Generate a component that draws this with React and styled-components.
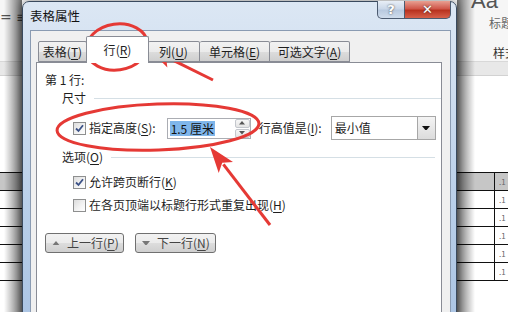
import React from "react";
import styled, { createGlobalStyle } from "styled-components";

const GlobalStyle = createGlobalStyle`
  html, body {
    margin: 0;
    padding: 0;
    width: 508px;
    height: 312px;
    overflow: hidden;
    background: #ffffff;
    font-family: "Noto Sans CJK SC", "Noto Sans", sans-serif;
    font-size: 12px;
    color: #1e1e1e;
  }
`;

const tableRows = [true, false, false, false, false, false];

const Page = styled.div`
  position: relative;
  width: 508px;
  height: 312px;
  display: flex;
  overflow: hidden;
`;

const DocPane = styled.div`
  display: flex;
  flex-direction: column;
  width: ${(p) => p.width}px;
  flex: ${(p) => (p.grow ? 1 : "none")};
  background: #ffffff;
  position: relative;
`;

const Ribbon = styled.div`
  height: 62px;
  background: #f6f6f6;
  border-bottom: 1px solid #d8d8d8;
  box-sizing: border-box;
  display: flex;
  flex-direction: column;
  padding-left: ${(p) => p.indent}px;
  color: #555;
  overflow: hidden;
`;

const Band = styled.div`
  height: 13px;
  background: #e8e8e8;
  border-bottom: 1px solid #d2d2d2;
`;

const Blank = styled.div`
  height: 96px;
`;

const TableRow = styled.div`
  height: 17px;
  border-top: 1.5px solid #111;
  background: ${(p) => (p.head ? "#c6c6c6" : "#fff")};
  display: flex;
`;

const Cell = styled.div`
  width: ${(p) => p.width}px;
  border-right: ${(p) => (p.line ? "1.5px solid #111" : "none")};
  font-size: 8px;
  color: #666;
  padding-left: 4px;
  line-height: 17px;
`;

const Shade = styled.div`
  position: absolute;
  top: 0;
  bottom: 0;
  ${(p) => (p.side === "left" ? "right: 0;" : "left: 0;")}
  width: 18px;
  background: linear-gradient(
    ${(p) => (p.side === "left" ? "to left" : "to right")},
    rgba(0, 0, 0, 0.55),
    rgba(0, 0, 0, 0)
  );
  pointer-events: none;
`;

const Dialog = styled.div`
  position: absolute;
  left: 22px;
  top: 1px;
  width: 435px;
  height: 340px;
  border: 1px solid #3a4a5e;
  border-radius: 7px 7px 0 0;
  box-sizing: border-box;
  background: linear-gradient(
    to bottom,
    #dce7f4 0%,
    #cfdef0 25%,
    #b9cfe9 60%,
    #a9c3e3 100%
  );
  display: flex;
  flex-direction: column;
  box-shadow: 0 0 10px rgba(0, 0, 0, 0.55);
`;

const TitleBar = styled.div`
  height: 28px;
  display: flex;
  align-items: flex-start;
  padding-left: 7px;
`;

const Title = styled.div`
  font-size: 12.5px;
  line-height: 28px;
  color: #111;
  flex: 1;
`;

const CaptionButton = styled.div`
  width: ${(p) => p.width}px;
  height: 18px;
  margin-top: -1px;
  box-sizing: border-box;
  border: 1px solid #4c5b70;
  border-top: none;
  display: flex;
  align-items: center;
  justify-content: center;
  font-family: "DejaVu Sans", sans-serif;
  font-weight: bold;
  font-size: 13px;
  color: #ffffff;
  background: ${(p) =>
    p.close
      ? "linear-gradient(to bottom, #e8a092 0%, #d0574a 45%, #b8321f 55%, #d7604a 100%)"
      : "linear-gradient(to bottom, #e8eef6 0%, #cbd8e9 45%, #b8c9df 55%, #cfdcec 100%)"};
  border-radius: ${(p) => (p.close ? "0 0 5px 0" : "0 0 0 5px")};
  text-shadow: 0 0 2px #333;
  ${(p) => (p.close ? "margin-right: 5px; border-left: none;" : "")}
`;

const Client = styled.div`
  flex: 1;
  margin: 0 5px 0 7px;
  background: #f0f0f0;
  border: 1px solid #8a9bb2;
  padding: 5px 8px 0 5px;
  display: flex;
  flex-direction: column;
`;

const TabRow = styled.div`
  display: flex;
  align-items: flex-end;
  padding-left: 2px;
  height: 26px;
  position: relative;
  z-index: 1;
`;

const Tab = styled.div`
  width: ${(p) => p.width}px;
  height: ${(p) => (p.active ? 27 : 21)}px;
  box-sizing: border-box;
  border: 1px solid #898c95;
  border-bottom: ${(p) => (p.active ? "none" : "1px solid #898c95")};
  margin-left: ${(p) => (p.active ? -1 : 0)}px;
  margin-right: ${(p) => (p.active ? -1 : 0)}px;
  margin-bottom: ${(p) => (p.active ? -1 : 0)}px;
  position: relative;
  z-index: ${(p) => (p.active ? 2 : 1)};
  border-left: ${(p) => (p.first || p.active ? "1px solid #898c95" : "none")};
  border-radius: 2px 2px 0 0;
  background: ${(p) =>
    p.active
      ? "#ffffff"
      : "linear-gradient(to bottom, #f2f2f2 0%, #ebebeb 50%, #dddddd 51%, #cfcfcf 100%)"};
  display: flex;
  align-items: center;
  justify-content: center;
  font-size: 12px;
  line-height: 16px;
  padding-top: ${(p) => (p.active ? 0 : 1)}px;
`;

const Key = styled.span`
  text-decoration: underline;
  text-underline-offset: 2px;
`;

const Panel = styled.div`
  flex: 1;
  background: #ffffff;
  border: 1px solid #898c95;
  padding: 8px 0 0 8px;
  display: flex;
  flex-direction: column;
`;

const Text = styled.div`
  line-height: 18px;
  white-space: nowrap;
`;

const GroupHead = styled.div`
  display: flex;
  align-items: center;
  gap: 8px;
  margin: ${(p) => p.margin};
  padding-left: 17px;
  padding-right: ${(p) => p.right}px;
  line-height: 18px;
  &::after {
    content: "";
    flex: 1;
    height: 1px;
    background: #d5dfe5;
  }
`;

const Row = styled.div`
  display: flex;
  align-items: center;
  padding-left: 28px;
  margin-top: ${(p) => p.top}px;
  height: ${(p) => p.height || 18}px;
`;

const Box = styled.div`
  width: 13px;
  height: 13px;
  box-sizing: border-box;
  border: 1px solid #8e8f8f;
  background: linear-gradient(135deg, #dcdcdc 0%, #f4f4f4 60%, #ffffff 100%);
  display: flex;
  align-items: center;
  justify-content: center;
  margin-right: 3px;
  flex: none;
`;

const Label = styled.div`
  white-space: nowrap;
  line-height: 18px;
`;

const Spin = styled.div`
  margin-left: 11px;
  width: 84px;
  height: 21px;
  box-sizing: border-box;
  border: 1px solid #abadb3;
  display: flex;
  align-items: center;
  padding-left: 2px;
`;

const Selected = styled.span`
  background: #7fb6ea;
  color: #111;
  line-height: 15px;
  padding: 0 1px;
  flex: none;
`;

const SpinButtons = styled.div`
  margin-left: auto;
  width: 15px;
  height: 19px;
  display: flex;
  flex-direction: column;
  gap: 1px;
`;

const SpinButton = styled.div`
  flex: 1;
  border: 1px solid #c4c7cd;
  border-radius: 2px;
  background: linear-gradient(to bottom, #f7f7f7, #e4e4e4);
  display: flex;
  align-items: center;
  justify-content: center;
`;

const Select = styled.div`
  margin-left: 9px;
  width: 105px;
  height: 24px;
  box-sizing: border-box;
  border: 1px solid #a7a7a7;
  display: flex;
  align-items: stretch;
  background: #fff;
`;

const SelectValue = styled.div`
  flex: 1;
  padding-left: 3px;
  line-height: 22px;
`;

const DropButton = styled.div`
  width: 17px;
  border-left: 1px solid #a7a7a7;
  background: linear-gradient(to bottom, #f4f4f4, #dcdcdc);
  display: flex;
  align-items: center;
  justify-content: center;
`;

const ButtonRow = styled.div`
  display: flex;
  gap: 11px;
  margin-top: 19px;
`;

const NavButton = styled.div`
  width: ${(p) => p.width}px;
  height: 20px;
  box-sizing: border-box;
  border: 1px solid #707070;
  border-radius: 3px;
  background: linear-gradient(to bottom, #f2f2f2 0%, #ebebeb 50%, #dddddd 51%, #cfcfcf 100%);
  display: flex;
  align-items: center;
  gap: 7px;
  padding-left: 6px;
  line-height: 16px;
  color: #444;
`;

const Overlay = styled.svg`
  position: absolute;
  left: 0;
  top: 0;
  pointer-events: none;
`;

const Check = () => (
  <svg width="9" height="9" viewBox="0 0 9 9">
    <path d="M1 4.5 L3.5 7 L8 1.2" fill="none" stroke="#3c5287" strokeWidth="1.8" />
  </svg>
);

const Tri = ({ up, size = 7, color = "#555" }) => (
  <svg width={size} height={size * 0.6} viewBox="0 0 10 6">
    <path d={up ? "M0 6 L5 0 L10 6 Z" : "M0 0 L10 0 L5 6 Z"} fill={color} />
  </svg>
);

const Arrow = ({ x1, y1, x2, y2 }) => {
  const dx = x2 - x1;
  const dy = y2 - y1;
  const len = Math.hypot(dx, dy);
  const ux = dx / len;
  const uy = dy / len;
  const hl = 26;
  const hw = 9;
  const bx = x2 - ux * hl;
  const by = y2 - uy * hl;
  const nx = -uy;
  const ny = ux;
  return (
    <g fill="#e53935" stroke="#e53935">
      <line x1={x1} y1={y1} x2={bx + ux * 4} y2={by + uy * 4} strokeWidth="3" />
      <path
        stroke="none"
        d={`M${x2} ${y2} L${bx + nx * hw} ${by + ny * hw} L${bx + ux * 6} ${by + uy * 6} L${bx - nx * hw} ${by - ny * hw} Z`}
      />
    </g>
  );
};

const tabs = [
  { text: "表格", key: "T", width: 49 },
  { text: "行", key: "R", width: 63, active: true },
  { text: "列", key: "U", width: 52 },
  { text: "单元格", key: "E", width: 70 },
  { text: "可选文字", key: "A", width: 80 },
];

const Doc = ({ width, side, children, cells }) => (
  <DocPane width={width}>
    {children}
    <Band />
    <Blank />
    {tableRows.map((head, i) => (
      <TableRow key={i} head={head}>
        {cells.map((c, j) => (
          <Cell key={j} width={c.width} line={c.line}>
            {c.text}
          </Cell>
        ))}
      </TableRow>
    ))}
    <TableRow />
    <Shade side={side} />
  </DocPane>
);

export default function App() {
  return (
    <Page>
      <GlobalStyle />
      <Doc width={22} side="left" cells={[{ width: 22 }]}>
        <Ribbon indent={0}>
          <Text style={{ marginTop: 8, fontFamily: "DejaVu Sans", fontSize: 14 }}>= ≡</Text>
        </Ribbon>
      </Doc>
      <DocPane grow />
      <Doc width={51} side="right" cells={[{ width: 37, line: true }, { width: 10, text: ".1" }]}>
        <Ribbon indent={14}>
          <Text style={{ fontSize: 22, lineHeight: "22px", marginTop: -10, fontFamily: "Liberation Sans" }}>
            Aa
          </Text>
          <Text style={{ marginTop: 2, paddingLeft: 18, color: "#666" }}>标题</Text>
          <Text style={{ marginTop: 12, paddingLeft: 22, color: "#333" }}>样式</Text>
        </Ribbon>
      </Doc>

      <Dialog>
        <TitleBar>
          <Title>表格属性</Title>
          <CaptionButton width={28}>?</CaptionButton>
          <CaptionButton width={46} close>
            ✕
          </CaptionButton>
        </TitleBar>
        <Client>
          <TabRow>
            {tabs.map((t, i) => (
              <Tab key={t.key} width={t.width} active={t.active} first={i === 0}>
                {t.text}(<Key>{t.key}</Key>)
              </Tab>
            ))}
          </TabRow>
          <Panel>
            <Text>第 1 行:</Text>
            <GroupHead margin="0" right={0}>
              <span>尺寸</span>
            </GroupHead>
            <Row top={10} height={22}>
              <Box>
                <Check />
              </Box>
              <Label>
                指定高度(<Key>S</Key>):
              </Label>
              <Spin>
                <Selected>1.5 厘米</Selected>
                <SpinButtons>
                  <SpinButton>
                    <Tri up size={6} />
                  </SpinButton>
                  <SpinButton>
                    <Tri size={6} />
                  </SpinButton>
                </SpinButtons>
              </Spin>
              <Label style={{ marginLeft: 8 }}>
                行高值是(<Key>I</Key>):
              </Label>
              <Select>
                <SelectValue>最小值</SelectValue>
                <DropButton>
                  <Tri size={8} color="#111" />
                </DropButton>
              </Select>
            </Row>
            <GroupHead margin="9px 0 0" right={6}>
              <span>
                选项(<Key>O</Key>)
              </span>
            </GroupHead>
            <Row top={7}>
              <Box>
                <Check />
              </Box>
              <Label>
                允许跨页断行(<Key>K</Key>)
              </Label>
            </Row>
            <Row top={5}>
              <Box />
              <Label>
                在各页顶端以标题行形式重复出现(<Key>H</Key>)
              </Label>
            </Row>
            <ButtonRow>
              <NavButton width={79}>
                <Tri up size={8} color="#777" />
                <span>
                  上一行(<Key>P</Key>)
                </span>
              </NavButton>
              <NavButton width={81}>
                <Tri size={8} color="#777" />
                <span>
                  下一行(<Key>N</Key>)
                </span>
              </NavButton>
            </ButtonRow>
          </Panel>
        </Client>
      </Dialog>

      <Overlay width="508" height="312">
        <ellipse cx="117" cy="47" rx="31" ry="23" fill="none" stroke="#e53935" strokeWidth="3" transform="rotate(-8 117 47)" />
        <ellipse cx="158" cy="127" rx="101" ry="23" fill="none" stroke="#e53935" strokeWidth="3" transform="rotate(-2 158 127)" />
        <Arrow x1={213} y1={80} x2={148} y2={48} />
        <Arrow x1={270} y1={225} x2={210} y2={147} />
      </Overlay>
    </Page>
  );
}
